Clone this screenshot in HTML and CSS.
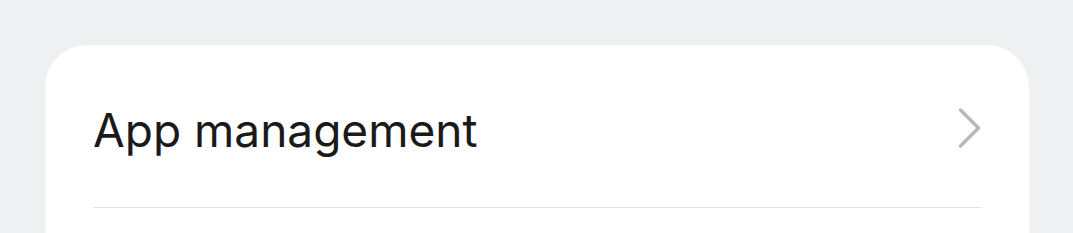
FILE: index.html
```html
<!DOCTYPE html>
<html lang="en">
<head>
    <meta charset="UTF-8">
    <meta name="viewport" content="width=device-width, initial-scale=1.0">
    <title>Settings</title>
    <link rel="stylesheet" href="styles.css">
</head>
<body>
    <div class="card">
        <div class="row">
            <span class="row-title">App management</span>
            <svg class="chevron" width="24" height="40" viewBox="0 0 24 40">
                <path d="M3.5 2 L21.5 20 L3.5 38" fill="none" stroke="#b8b8b8" stroke-width="3.4" stroke-linecap="round" stroke-linejoin="round"/>
            </svg>
        </div>
    </div>
</body>
</html>
```

FILE: styles.css
```css
body {
    margin: 0;
    padding: 45px 44px 0 45px;
    background-color: #eff0f2;
    font-family: 'Inter', 'Noto Sans', sans-serif;
    height: 233px;
    box-sizing: border-box;
    overflow: hidden;
}
.card {
    background-color: #fff;
    border-radius: 42px 42px 0 0;
    padding: 0 48px;
    height: 188px;
}
.row {
    display: flex;
    align-items: center;
    justify-content: space-between;
    box-sizing: border-box;
    height: 163px;
    padding-top: 8px;
    border-bottom: 1px solid #e2e2e2;
}
.row-title {
    font-size: 46px;
    color: #1a1a1a;
}
.chevron {
    margin-bottom: 4px;
}
```
